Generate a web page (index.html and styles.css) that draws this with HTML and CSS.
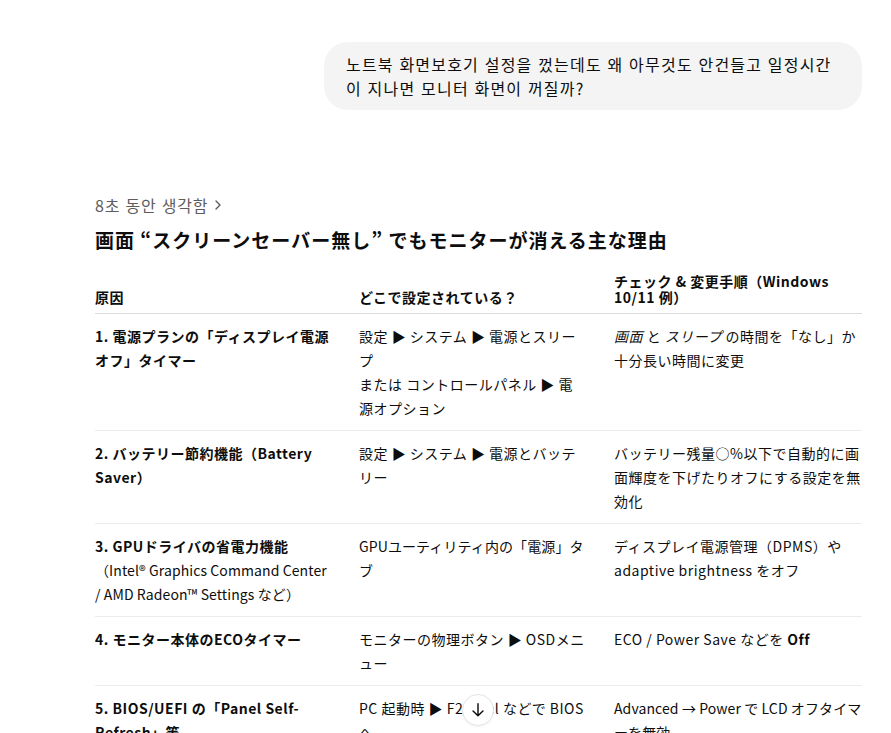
FILE: index.html
```html
<!DOCTYPE html>
<html lang="ja">
<head>
<meta charset="utf-8">
<title>Chat</title>
<link rel="stylesheet" href="styles.css">
</head>
<body>
<main class="thread">
  <div class="user-row">
    <div class="bubble" lang="ko">노트북 화면보호기 설정을 껐는데도 왜 아무것도 안건들고 일정시간 이 지나면 모니터 화면이 꺼질까?</div>
  </div>
  <div class="answer">
    <div class="thought" lang="ko">8초 동안 생각함 <svg class="chev" width="8" height="12" viewBox="0 0 8 12" fill="none" stroke="#5d5d5d" stroke-width="1.4" stroke-linecap="round" stroke-linejoin="round"><path d="M2 2l4 4-4 4"/></svg></div>
    <h3 class="title">画面 “スクリーンセーバー無し” でもモニターが消える主な理由</h3>
    <table class="tbl">
      <colgroup><col class="c1"><col class="c2"><col class="c3"></colgroup>
      <thead>
        <tr><th>原因</th><th>どこで設定されている？</th><th>チェック &amp; 変更手順（Windows 10/11 例）</th></tr>
      </thead>
      <tbody>
        <tr>
          <td><b>1. 電源プランの「ディスプレイ電源オフ」タイマー</b></td>
          <td>設定 ▶ システム ▶ 電源とスリープ<br>または コントロールパネル ▶ 電源オプション</td>
          <td><i>画面</i> と <i>スリープ</i> の時間を「なし」か十分長い時間に変更</td>
        </tr>
        <tr>
          <td><b>2. バッテリー節約機能（Battery Saver）</b></td>
          <td>設定 ▶ システム ▶ 電源とバッテリー</td>
          <td>バッテリー残量○%以下で自動的に画面輝度を下げたりオフにする設定を無効化</td>
        </tr>
        <tr>
          <td><b>3. GPUドライバの省電力機能</b><br><span class="tight">（Intel® Graphics Command Center /&nbsp;AMD Radeon™ Settings など）</span></td>
          <td><span class="tight">GPUユーティリティ内の「電源」タブ</span></td>
          <td>ディスプレイ電源管理（DPMS）や adaptive brightness をオフ</td>
        </tr>
        <tr>
          <td><b>4. モニター本体のECOタイマー</b></td>
          <td>モニターの物理ボタン ▶ OSDメニュー</td>
          <td>ECO / Power Save などを <b>Off</b></td>
        </tr>
        <tr>
          <td><b>5. BIOS/UEFI の「Panel Self-Refresh」等</b></td>
          <td>PC 起動時 ▶ F2 / Del などで BIOS へ</td>
          <td><span class="tight">Advanced → Power で LCD オフタイマーを無効</span></td>
        </tr>
      </tbody>
    </table>
  </div>
</main>
<button class="scroll-btn" aria-label="scroll down">
  <svg width="18" height="18" viewBox="0 0 20 20" fill="none" stroke="#0d0d0d" stroke-width="1.6" stroke-linecap="round" stroke-linejoin="round"><path d="M10 3v13.5M4.5 11l5.5 5.5 5.5-5.5"/></svg>
</button>
</body>
</html>
```

FILE: styles.css
```css
html, body {
  margin: 0;
  padding: 0;
  background: #ffffff;
  color: #0d0d0d;
  font-family: "Noto Sans CJK JP", "Noto Sans", sans-serif;
  overflow: hidden;
  height: 733px;
}

.thread {
  padding: 42px 29px 0 95px;
}

.user-row {
  display: flex;
  justify-content: flex-end;
}

.bubble {
  width: 538px;
  box-sizing: border-box;
  background: #f4f4f4;
  border-radius: 24px;
  padding: 10px 20px 10px 22px;
  font-family: "Noto Sans CJK KR", sans-serif;
  font-size: 16px;
  line-height: 24px;
  letter-spacing: 1.2px;
  color: #0d0d0d;
}

.answer {
  padding-top: 84px;
}

.thought {
  display: flex;
  align-items: center;
  gap: 6px;
  font-family: "Noto Sans CJK KR", sans-serif;
  font-size: 16px;
  line-height: 22px;
  letter-spacing: 0.8px;
  color: #5d5d5d;
}

.title {
  margin: 10px 0 0;
  font-size: 19px;
  line-height: 28px;
  font-weight: 700;
  letter-spacing: 1px;
}

.tbl {
  width: 767px;
  margin-top: 19px;
  border-collapse: collapse;
  table-layout: fixed;
  font-size: 14px;
  letter-spacing: 0.5px;
}

.c1 { width: 264px; }
.c2 { width: 255px; }
.c3 { width: 248px; }

.tbl th {
  text-align: left;
  vertical-align: bottom;
  font-weight: 700;
  font-size: 14px;
  line-height: 16px;
  letter-spacing: 0.5px;
  padding: 0 24px 8px 0;
  border-bottom: 1px solid #dcdcdc;
}

.tbl td {
  vertical-align: top;
  line-height: 24px;
  padding: 10px 28px 10px 0;
  border-bottom: 1px solid #ececec;
}

.tbl td:first-child {
  padding-right: 22px;
}

.tbl th:last-child,
.tbl td:last-child {
  padding-right: 0;
}

.tbl b { font-weight: 700; }

.tight {
  letter-spacing: 0.1px;
}

.scroll-btn {
  position: fixed;
  left: 462px;
  top: 694px;
  width: 32px;
  height: 32px;
  border-radius: 50%;
  border: 1px solid #e3e3e3;
  background: #ffffff;
  display: flex;
  align-items: center;
  justify-content: center;
  padding: 0;
  box-shadow: 0 1px 3px rgba(0,0,0,0.05);
}
```
